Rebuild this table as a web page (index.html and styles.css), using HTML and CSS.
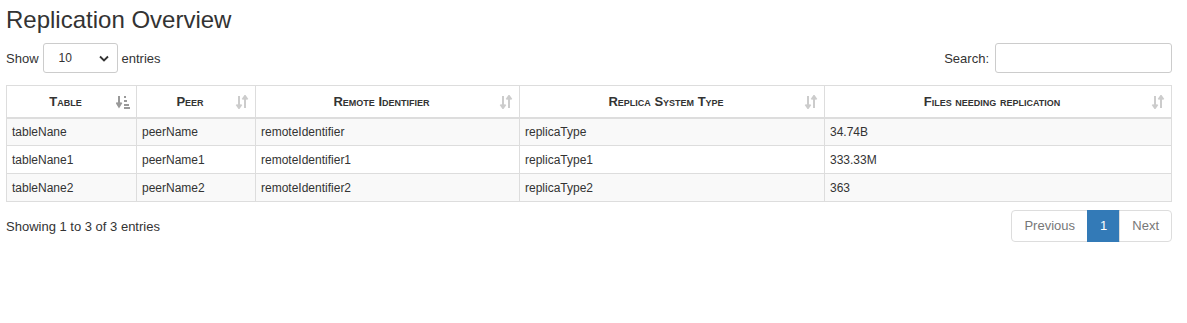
FILE: index.html
```html
<!DOCTYPE html>
<html lang="en">
<head>
    <meta charset="UTF-8">
    <title>Replication Overview</title>
    <link rel="stylesheet" href="styles.css">
</head>
<body>
    <h2 class="page-title">Replication Overview</h2>

    <div class="dt-top">
        <label class="dt-length">Show
            <span class="select-box">10
                <svg class="caret" width="10" height="7" viewBox="0 0 10 7"><path d="M1 1.5 L5 5.5 L9 1.5" fill="none" stroke="#333" stroke-width="1.8"/></svg>
            </span>
            entries</label>
        <label class="dt-search">Search: <input type="text" class="search-input"></label>
    </div>

    <table class="dt-table">
        <thead>
            <tr>
                <th class="c1">Table <svg class="sort active" width="14" height="14" viewBox="0 0 14 14"><path d="M3 1v9M0.5 7.5 3 11.5 5.5 7.5" fill="none" stroke="#999" stroke-width="2"/><rect x="8" y="1" width="2" height="2" fill="#999"/><rect x="8" y="5" width="3" height="2" fill="#999"/><rect x="8" y="9" width="5" height="2" fill="#999"/><rect x="8" y="12" width="6" height="2" fill="#999"/></svg></th>
                <th class="c2">Peer <svg class="sort" width="14" height="14" viewBox="0 0 14 14"><path d="M4 1v11M1.5 9.5 4 13 6.5 9.5M10 13V2M7.5 4.5 10 1 12.5 4.5" fill="none" stroke="#ccc" stroke-width="2"/></svg></th>
                <th class="c3">Remote Identifier <svg class="sort" width="14" height="14" viewBox="0 0 14 14"><path d="M4 1v11M1.5 9.5 4 13 6.5 9.5M10 13V2M7.5 4.5 10 1 12.5 4.5" fill="none" stroke="#ccc" stroke-width="2"/></svg></th>
                <th class="c4">Replica System Type <svg class="sort" width="14" height="14" viewBox="0 0 14 14"><path d="M4 1v11M1.5 9.5 4 13 6.5 9.5M10 13V2M7.5 4.5 10 1 12.5 4.5" fill="none" stroke="#ccc" stroke-width="2"/></svg></th>
                <th class="c5">Files needing replication <svg class="sort" width="14" height="14" viewBox="0 0 14 14"><path d="M4 1v11M1.5 9.5 4 13 6.5 9.5M10 13V2M7.5 4.5 10 1 12.5 4.5" fill="none" stroke="#ccc" stroke-width="2"/></svg></th>
            </tr>
        </thead>
        <tbody>
            <tr><td>tableNane</td><td>peerName</td><td>remoteIdentifier</td><td>replicaType</td><td>34.74B</td></tr>
            <tr><td>tableNane1</td><td>peerName1</td><td>remoteIdentifier1</td><td>replicaType1</td><td>333.33M</td></tr>
            <tr><td>tableNane2</td><td>peerName2</td><td>remoteIdentifier2</td><td>replicaType2</td><td>363</td></tr>
        </tbody>
    </table>

    <div class="dt-bottom">
        <div class="dt-info">Showing 1 to 3 of 3 entries</div>
        <ul class="pagination">
            <li class="page disabled">Previous</li>
            <li class="page current">1</li>
            <li class="page disabled">Next</li>
        </ul>
    </div>
</body>
</html>
```

FILE: styles.css
```css
* {
    box-sizing: border-box;
}

body {
    margin: 0;
    padding: 0 15px 0 6px;
    font-family: "Liberation Sans", Arial, sans-serif;
    font-size: 13px;
    color: #333;
    background: #fff;
}

.page-title {
    margin: 0;
    padding-top: 6px;
    font-size: 24px;
    font-weight: 400;
    line-height: 28px;
    height: 43px;
}

.dt-top {
    display: flex;
    justify-content: space-between;
    align-items: center;
    height: 30px;
}

.dt-length,
.dt-search {
    display: flex;
    align-items: center;
    gap: 4px;
}

.dt-search {
    gap: 6px;
}

.select-box {
    display: flex;
    align-items: center;
    justify-content: space-between;
    width: 75px;
    height: 30px;
    padding: 0 8px 0 15px;
    border: 1px solid #ccc;
    border-radius: 3px;
    font-size: 12px;
}

.search-input {
    width: 177px;
    height: 30px;
    border: 1px solid #ccc;
    border-radius: 3px;
    margin: 0;
}

.dt-table {
    width: 100%;
    margin-top: 12px;
    border-collapse: collapse;
    border: 1px solid #ddd;
    font-size: 12px;
}

.dt-table th {
    position: relative;
    height: 32px;
    padding: 0 20px 0 8px;
    border: 1px solid #ddd;
    border-bottom: 2px solid #ddd;
    font-variant: small-caps;
    font-weight: 700;
    font-size: 13px;
    text-align: center;
}

.sort {
    position: absolute;
    right: 6px;
    top: 9px;
}

.c1 { width: 130px; }
.c2 { width: 119px; }
.c3 { width: 264px; }
.c4 { width: 305px; }

.dt-table td {
    height: 28px;
    padding: 0 5px;
    border: 1px solid #ddd;
}

.dt-table tbody tr:nth-child(odd) {
    background: #f9f9f9;
}

.dt-bottom {
    display: flex;
    justify-content: space-between;
    align-items: center;
    margin-top: 8px;
}

.pagination {
    display: flex;
    margin: 0;
    padding: 0;
    list-style: none;
}

.page {
    height: 32px;
    line-height: 30px;
    padding: 0 12px;
    border: 1px solid #ddd;
    margin-left: -1px;
    color: #777;
}

.page:first-child {
    border-radius: 4px 0 0 4px;
}

.page:last-child {
    border-radius: 0 4px 4px 0;
}

.page.current {
    background: #337ab7;
    border-color: #337ab7;
    color: #fff;
}
```
